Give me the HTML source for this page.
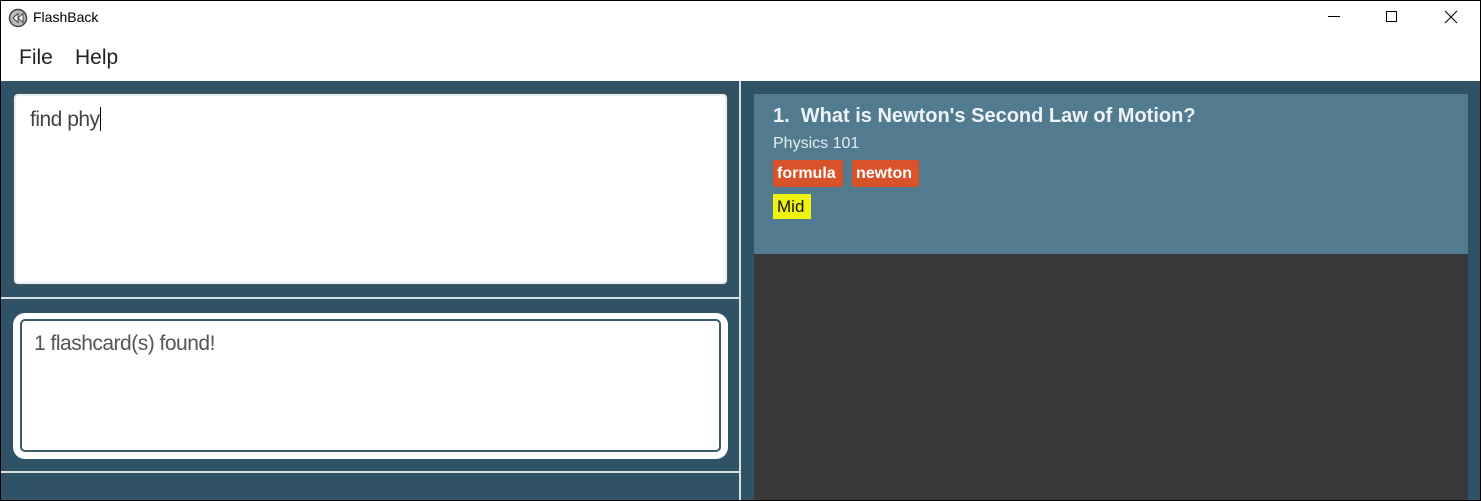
<!DOCTYPE html>
<html><head><style>
*{margin:0;padding:0;box-sizing:border-box}
body{width:1481px;height:501px;overflow:hidden;background:#fff;font-family:"Liberation Sans",sans-serif;position:relative}
.win{position:absolute;left:0;top:0;width:1481px;height:501px;border:1px solid #000}
.abs{position:absolute}
</style></head><body>
<div class="win"></div>
<svg class="abs" style="left:8px;top:8px" width="20" height="20" viewBox="0 0 20 20"><circle cx="10" cy="10" r="8.5" fill="#bbb" stroke="#444" stroke-width="1.5"/><path d="M10 5.5 L5 10 L10 14.5Z M15 5.5 L10 10 L15 14.5Z" fill="#fff" stroke="#444" stroke-width="1"/></svg>
<div class="abs" style="left:33px;top:9px;font-size:14px;color:#000">FlashBack</div>
<div class="abs" style="left:1328px;top:16px;width:12px;height:1px;background:#000"></div>
<div class="abs" style="left:1386px;top:11px;width:11px;height:11px;border:1px solid #000"></div>
<svg class="abs" style="left:1444px;top:10px" width="14" height="14"><path d="M1 1L13 13M13 1L1 13" stroke="#000" stroke-width="1"/></svg>
<div class="abs" style="left:19px;top:46px;font-size:21px;color:#222">File</div>
<div class="abs" style="left:75px;top:46px;font-size:21px;color:#222">Help</div>
<div class="abs" style="left:1px;top:81px;width:1479px;height:419px;background:#2f5266"></div>
<div class="abs" style="left:739px;top:81px;width:2px;height:419px;background:#d8e0e4"></div>
<div class="abs" style="left:1px;top:297px;width:738px;height:2px;background:#d8e0e4"></div>
<div class="abs" style="left:1px;top:471px;width:738px;height:2px;background:#d8e0e4"></div>
<div class="abs" style="left:13px;top:93px;width:715px;height:192px;background:#fff;border:1px solid #555;border-radius:5px;box-shadow:inset 0 0 0 2px #e4f0f8"></div>
<div class="abs" style="left:30px;top:107px;font-size:21px;color:#444;letter-spacing:-0.5px">find phy<span style="display:inline-block;width:1px;height:24px;background:#000;vertical-align:-5px"></span></div>
<div class="abs" style="left:13px;top:313px;width:715px;height:146px;background:#fff;border-radius:12px"></div>
<div class="abs" style="left:20px;top:319px;width:701px;height:133px;background:#fff;border:2px solid #3c5a6a;border-radius:5px"></div>
<div class="abs" style="left:34px;top:332px;font-size:21px;color:#555;letter-spacing:-0.5px">1 flashcard(s) found!</div>
<div class="abs" style="left:754px;top:94px;width:714px;height:406px;background:#383838"></div>
<div class="abs" style="left:754px;top:94px;width:714px;height:160px;background:#527b8f"></div>
<div class="abs" style="left:773px;top:105px;font-size:20px;font-weight:bold;color:#eef3f6">1.&nbsp; What is Newton's Second Law of Motion?</div>
<div class="abs" style="left:773px;top:135px;font-size:16px;color:#e6edf1">Physics 101</div>
<div class="abs" style="left:773px;top:160px;height:27px;width:70px;background:#d8522a;border-radius:2px;color:#fff;font-size:16px;font-weight:bold;line-height:27px;padding-left:4px">formula</div>
<div class="abs" style="left:852px;top:160px;height:27px;width:67px;background:#d8522a;border-radius:2px;color:#fff;font-size:16px;font-weight:bold;line-height:27px;padding-left:4px">newton</div>
<div class="abs" style="left:773px;top:194px;height:25px;width:38px;background:#eef20e;color:#111;font-size:17px;line-height:25px;padding-left:4px">Mid</div>
</body></html>
